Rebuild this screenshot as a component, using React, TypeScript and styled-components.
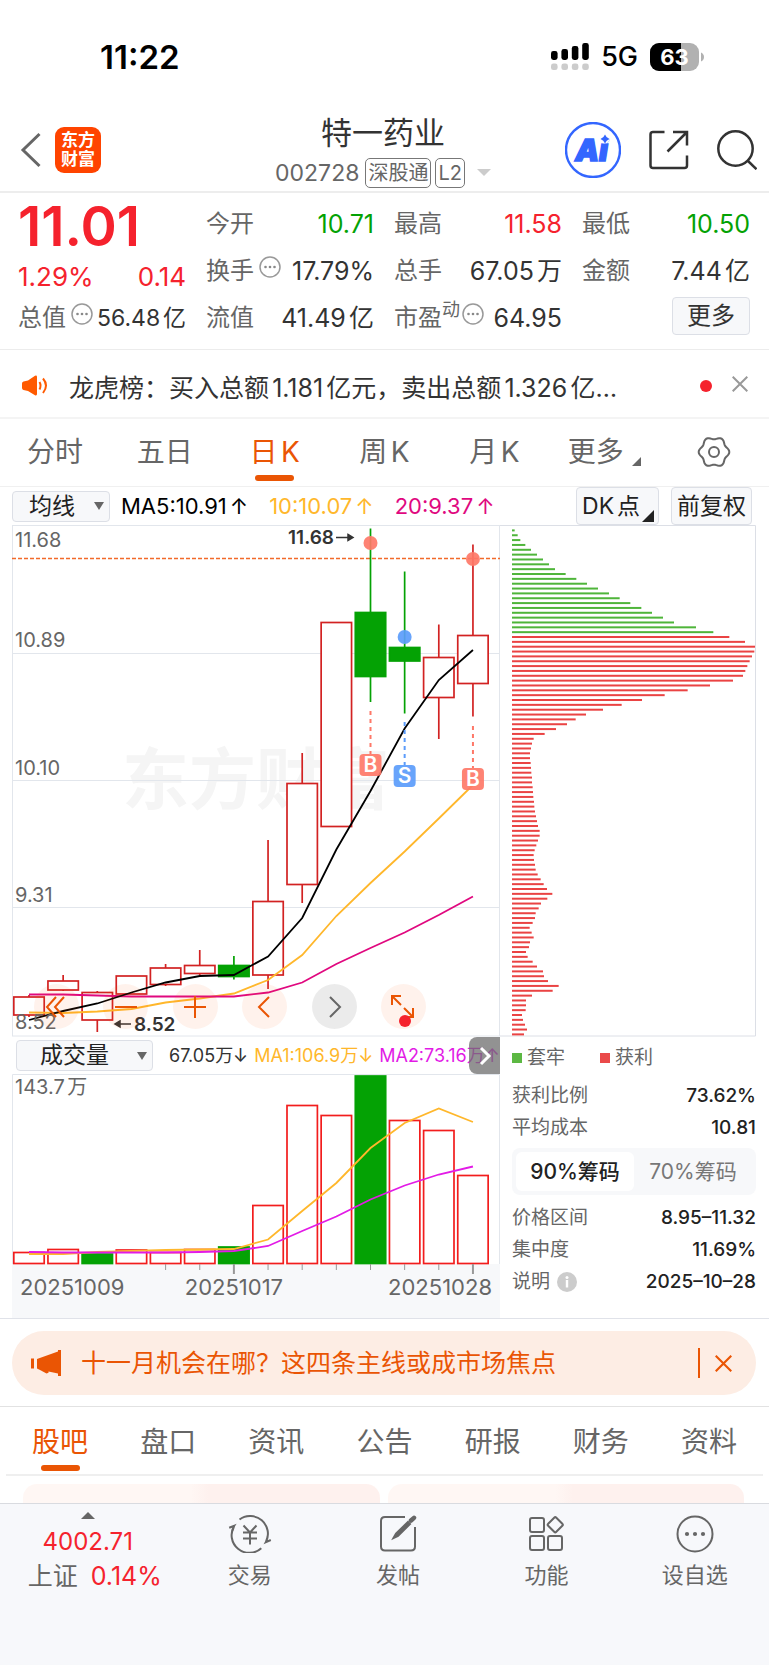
import React from "react";
import styled, { createGlobalStyle, css } from "styled-components";

const ORANGE = "#ea5504";
const RED = "#f5222d";
const GREEN = "#04a204";
const CANDLE_RED = "#d22222";
const GREY = "#666";
const INK = "#333";
const YELLOW = "#ffb72b";
const MAGENTA = "#e0087f";
const VIOLET = "#e21be6";

const Global = createGlobalStyle`
  * { box-sizing: border-box; }
  body {
    margin: 0;
    background: #fff;
    color: ${INK};
    font-family: Inter, "Noto Sans CJK SC", sans-serif;
  }
  button, select {
    font: inherit;
    color: inherit;
    background: none;
    border: 0;
    padding: 0;
    margin: 0;
    cursor: pointer;
  }
  svg { display: block; flex: none; }
`;

const Page = styled.div`
  display: flex;
  flex-direction: column;
  min-height: 100vh;
  overflow-x: hidden;
`;

/* ---------- status bar ---------- */

const StatusBar = styled.div`
  display: flex;
  align-items: center;
  justify-content: space-between;
  height: 107px;
  padding: 7px 65px 0 100px;
  color: #000;
`;

const Clock = styled.span`
  font-size: 33px;
  font-weight: 600;
  line-height: 40px;
`;

const StatusIcons = styled.div`
  display: flex;
  align-items: center;
  gap: 12px;
  font-size: 27px;
  font-weight: 500;
  line-height: 32px;
`;

/* ---------- header ---------- */

const Header = styled.header`
  display: grid;
  grid-template-columns: 1fr auto 1fr;
  align-items: center;
  height: 86px;
  padding: 0 12px 2px;
  border-bottom: 2px solid #ededed;
`;

const HeaderSide = styled.div<{ $end?: boolean }>`
  display: flex;
  align-items: center;
  gap: ${(p) => (p.$end ? 28 : 14)}px;
  padding-left: ${(p) => (p.$end ? 0 : 8)}px;
  justify-content: ${(p) => (p.$end ? "flex-end" : "flex-start")};
`;

const IconButton = styled.button`
  display: flex;
  align-items: center;
  justify-content: center;
  flex: none;
`;

const AppLogo = styled.a`
  display: flex;
  align-items: center;
  justify-content: center;
  width: 46px;
  height: 46px;
  border-radius: 9px;
  background: #ff4400;
  color: #fff;
  font-size: 17px;
  font-weight: 700;
  line-height: 19px;
  text-align: center;
  text-decoration: none;
`;

const TitleBlock = styled.div`
  display: flex;
  flex-direction: column;
  align-items: center;
  padding: 5px 3px 0 0;
`;

const Title = styled.h1`
  margin: 0;
  font-size: 31px;
  font-weight: 400;
  line-height: 42px;
`;

const Subtitle = styled.div`
  display: flex;
  align-items: center;
  gap: 4px;
  height: 38px;
  color: ${GREY};
  font-size: 23px;
  line-height: 32px;
`;

const Tag = styled.span`
  height: 30px;
  padding: 0 2px;
  border: 1px solid #777;
  border-radius: 5px;
  font-size: 20px;
  line-height: 28px;
  &:first-of-type { margin-left: 2px; }
`;

const Caret = styled.span<{ $color: string; $size?: number; $up?: boolean }>`
  width: 0;
  height: 0;
  border: ${(p) => p.$size ?? 7}px solid transparent;
  ${(p) =>
    p.$up
      ? css`border-top: 0; border-bottom-color: ${p.$color};`
      : css`border-bottom: 0; border-top: 8px solid ${p.$color};`}
`;

/* ---------- quote panel ---------- */

const Quote = styled.section`
  display: grid;
  grid-template-columns: repeat(4, 1fr);
  column-gap: 20px;
  padding: 7px 19px 7px 18px;
  height: 157px;
  border-bottom: 1px solid #ececec;
`;

const QuoteColumn = styled.div`
  display: grid;
  grid-template-rows: repeat(3, 47px);
`;

const PriceColumn = styled.div`
  display: grid;
  grid-template-rows: 53px 48px 34px;
`;

const Price = styled.div`
  color: ${RED};
  font-size: 55px;
  font-weight: 600;
  line-height: 53px;
`;

const QuoteRow = styled.div<{ $color?: string; $size?: number }>`
  display: flex;
  align-items: center;
  justify-content: space-between;
  color: ${(p) => p.$color ?? INK};
  font-size: ${(p) => p.$size ?? 25}px;
  line-height: 34px;
  white-space: nowrap;
  text-autospace: normal;
`;

const QuoteLabel = styled.span`
  display: flex;
  align-items: center;
  color: ${GREY};
  font-size: 24px;
  svg { margin: 0 0 8px 5px; }
  sup {
    align-self: flex-start;
    font-size: 18px;
    line-height: 18px;
  }
  sup + svg { margin-left: 2px; }
`;

const MoreButton = styled.button`
  justify-self: end;
  align-self: center;
  height: 38px;
  margin-bottom: 4px;
  padding: 0 14px;
  border: 1px solid #dcdfe6;
  border-radius: 4px;
  background: #f7f8fa;
  font-size: 24px;
  line-height: 32px;
`;

/* ---------- news ---------- */

const News = styled.section`
  display: flex;
  align-items: center;
  height: 69px;
  padding: 0 21px;
  border-bottom: 2px solid #f4f4f4;
`;

const NewsText = styled.a`
  flex: 1;
  min-width: 0;
  margin: 0 60px 0 21px;
  padding-top: 8px;
  overflow: hidden;
  color: ${INK};
  font-size: 25px;
  line-height: 36px;
  text-decoration: none;
  text-overflow: ellipsis;
  white-space: nowrap;
  text-autospace: normal;
`;

const Dot = styled.span`
  width: 12px;
  height: 12px;
  margin: 4px 20px 0 0;
  border-radius: 50%;
  background: ${RED};
`;

/* ---------- tabs ---------- */

const Tab = styled.button<{ $active?: boolean }>`
  display: flex;
  flex: 1;
  flex-direction: column;
  align-items: center;
  justify-content: flex-end;
  padding-bottom: 5px;
  color: ${(p) => (p.$active ? ORANGE : GREY)};
  font-size: 28px;
  line-height: 40px;
  text-autospace: normal;
  &::after {
    content: "";
    width: 39px;
    height: 6px;
    margin-top: 3px;
    border-radius: 3px;
    background: ${(p) => (p.$active ? ORANGE : "transparent")};
  }
`;

const Tabs = styled.nav`
  display: flex;
  height: 68px;
  border-bottom: 1px solid #f0f0f0;
`;

const SectionTabs = styled(Tabs)`
  height: 69px;
  margin: 0 6px;
  border-bottom: 2px solid #efefef;
  ${Tab} { padding-bottom: 3px; }
`;

const TabLabel = styled.span`
  display: flex;
  align-items: flex-end;
  height: 40px;
  svg { margin: 0 0 6px 8px; }
`;

const GearLabel = styled(TabLabel)`
  align-items: center;
  svg { margin: 0; }
`;

/* ---------- charts ---------- */

const ChartToolbar = styled.div`
  display: flex;
  align-items: center;
  height: 38px;
  padding: 0 17px 0 12px;
  color: #000;
  font-size: 22px;
  line-height: 30px;
  white-space: nowrap;
`;

const Indicator = styled.span<{ $color: string }>`
  display: flex;
  gap: 3px;
  margin-right: 21px;
  color: ${(p) => p.$color};
`;

const ChipButton = styled.button`
  position: relative;
  height: 38px;
  margin-left: 12px;
  padding: 0 5px;
  border: 1px solid #dcdfe6;
  border-radius: 4px;
  background: #f7f8fa;
  color: #222;
  font-size: 23px;
  line-height: 34px;
  text-autospace: normal;
`;

const DkButton = styled(ChipButton)`
  margin-left: auto;
  padding-right: 18px;
  svg { position: absolute; right: 4px; bottom: 2px; }
`;

const SelectBox = styled.label<{ $wide?: boolean }>`
  display: flex;
  position: relative;
  flex: none;
  align-items: center;
  width: ${(p) => (p.$wide ? 137 : 98)}px;
  height: 31px;
  margin-right: ${(p) => (p.$wide ? 16 : 11)}px;
  border: 1px solid #dcdfe6;
  border-radius: 4px;
  background: #f7f8fa;
  color: #222;
  select {
    width: 100%;
    height: 100%;
    padding-left: ${(p) => (p.$wide ? 23 : 16)}px;
    appearance: none;
    font-size: 23px;
    line-height: 29px;
    outline: 0;
  }
  ${Caret} {
    position: absolute;
    right: 5px;
    pointer-events: none;
  }
`;

const Charts = styled.section`
  display: grid;
  grid-template-columns: 488fr 257fr;
  padding: 0 12px;
  border-bottom: 1px solid #e0e2e9;
`;

const ChartColumn = styled.div`
  min-width: 0;
`;

const ChartStage = styled.div`
  position: relative;
`;

const Plot = styled.svg`
  width: 100%;
  height: auto;
  font-family: Inter, "Noto Sans CJK SC", sans-serif;
  text { text-autospace: normal; }
`;

const ZoomBar = styled.div`
  display: flex;
  position: absolute;
  right: 74px;
  bottom: 8px;
  left: 22px;
  justify-content: space-between;
`;

const RoundButton = styled(IconButton)<{ $dark?: boolean }>`
  width: 45px;
  height: 45px;
  border-radius: 50%;
  background: ${(p) => (p.$dark ? "rgba(0,0,0,.08)" : "rgba(255,90,10,.08)")};
`;

const VolumeBar = styled.div`
  display: flex;
  position: relative;
  align-items: center;
  height: 37px;
  padding-left: 4px;
  overflow: hidden;
  font-size: 18px;
  line-height: 26px;
  white-space: nowrap;
`;

const VolumeText = styled.span<{ $color: string }>`
  margin-right: 6px;
  padding-top: 1px;
  color: ${(p) => p.$color};
`;

const NextButton = styled(IconButton)`
  position: absolute;
  top: 0;
  right: 0;
  width: 31px;
  height: 37px;
  border-radius: 8px 0 0 8px;
  background: rgba(110, 110, 110, 0.75);
`;

const Stats = styled.div`
  padding: 5px 1px 0 12px;
  color: ${GREY};
  font-size: 19px;
  line-height: 30px;
`;

const Legend = styled.div`
  display: flex;
  gap: 35px;
  height: 38px;
`;

const LegendItem = styled.span<{ $color: string }>`
  display: flex;
  align-items: center;
  height: 31px;
  gap: 5px;
  &::before {
    content: "";
    width: 10px;
    height: 10px;
    background: ${(p) => p.$color};
  }
`;

const StatRow = styled.div`
  display: flex;
  align-items: center;
  justify-content: space-between;
  height: 32px;
  span { display: flex; align-items: center; gap: 7px; }
  strong { color: #222; font-weight: 500; }
`;

const Segment = styled.div`
  display: flex;
  height: 47px;
  margin: 4px 0 7px;
  padding: 4px;
  border-radius: 8px;
  background: #f7f8fa;
`;

const SegmentButton = styled.button<{ $active?: boolean }>`
  flex: 1;
  border-radius: 6px;
  background: ${(p) => (p.$active ? "#fff" : "transparent")};
  color: ${(p) => (p.$active ? "#222" : "#777")};
  font-size: 21px;
  font-weight: ${(p) => (p.$active ? 500 : 400)};
`;

/* ---------- banner, feed ---------- */

const BannerWrap = styled.section`
  padding: 12px 13px 11px 12px;
  border-bottom: 1px solid #e2e2e2;
`;

const Banner = styled.div`
  display: flex;
  align-items: center;
  height: 64px;
  padding: 0 24px 0 19px;
  border-radius: 32px;
  background: #fdede4;
  color: ${ORANGE};
`;

const BannerText = styled.a`
  flex: 1;
  margin-left: 20px;
  color: inherit;
  font-size: 25px;
  line-height: 36px;
  text-decoration: none;
`;

const Divider = styled.span`
  width: 2px;
  height: 30px;
  margin-right: 15px;
  background: ${ORANGE};
`;

const Feed = styled.div`
  display: flex;
  gap: 8px;
  height: 27px;
  padding: 8px 25px 0 23px;
  overflow: hidden;
`;

const FeedCard = styled.div`
  flex: 1;
  height: 120px;
  border-radius: 14px;
  background: linear-gradient(90deg, #fff7f4 0 47%, #fef1ee 52%);
`;

/* ---------- bottom navigation ---------- */

const BottomNav = styled.nav`
  display: grid;
  grid-template-columns: 175fr repeat(4, 148fr);
  flex: 1;
  align-items: start;
  min-height: 162px;
  border-top: 1px solid #d9dbe0;
  background: #f7f8fb;
`;

const NavItem = styled.button`
  display: flex;
  flex-direction: column;
  align-items: center;
  gap: 6px;
  padding-top: 11px;
  color: ${GREY};
  font-size: 22px;
  line-height: 32px;
`;

const IndexItem = styled.button`
  display: flex;
  flex-direction: column;
  align-items: center;
  padding-top: 8px;
  color: ${RED};
  font-size: 24px;
  line-height: 34px;
  ${Caret} { margin-bottom: 6px; }
`;

const IndexChange = styled.span`
  display: flex;
  gap: 13px;
  padding-left: 14px;
  font-size: 25px;
  em { color: ${GREY}; font-style: normal; }
`;

/* ---------- data ---------- */

const SLOT = 34.15;
const centre = (i: number) => 29 + i * SLOT;

type Candle = [high: number, top: number, bottom: number, low: number, up: boolean];

const candles: Candle[] = [
  [995, 997, 1015, 1017, true],
  [975, 981, 990, 991, true],
  [991, 992.5, 1020, 1032, true],
  [976, 976, 994, 994, true],
  [964, 968, 984.5, 986, true],
  [950, 965.5, 973.5, 975, true],
  [956, 965.5, 976.5, 979.5, false],
  [840, 901.5, 975, 989, true],
  [753, 783.5, 884.5, 903, true],
  [622.5, 622.5, 826.5, 826.5, true],
  [528.5, 612.5, 676.5, 702, false],
  [571.5, 647.5, 661, 713.5, false],
  [624.5, 657.5, 697.5, 739, true],
  [544.5, 635.5, 683.5, 716.5, true],
];

const ma5 = [1020, 1011, 1003.5, 992.5, 982.5, 976, 975, 956.5, 918, 849.5, 791, 728.5, 680, 650];
const ma10 = [1012.5, 1013, 1011.5, 1009, 1002.5, 998.5, 993.5, 980, 955, 916, 883, 851.5, 818.5, 785];
const ma20 = [994.5, 994.5, 995.5, 996.5, 996.5, 996.5, 996.5, 992.5, 982.5, 964, 948, 932.5, 915, 896.5];

const volumes = [1252.5, 1249.5, 1254, 1250, 1252.5, 1249.5, 1247, 1205.5, 1105.5, 1115.5, 1076, 1120.5, 1130.5, 1175.5];
const fallingVolumes = [2, 6, 10];
const volMa1 = [1254, 1254, 1252, 1251, 1250, 1249.5, 1249, 1239.5, 1211, 1183, 1148, 1123, 1108.5, 1122];
const volMa2 = [1252, 1252.5, 1252.5, 1252.5, 1252.5, 1252, 1251, 1246, 1231, 1216.5, 1199.5, 1185.5, 1174.5, 1166.5];

const chips = [
  8, 17, 25, 40, 57, 75, 93, 111, 129, 161, 193, 225, 258, 291, 323, 355, 388, 420, 453, 486, 552, 604,
  652, 699, 729, 727, 720, 713, 706, 700, 693, 663, 594, 527, 458, 390, 329, 273, 222, 191, 165, 132, 98,
  65, 60, 57, 54, 54, 56, 57, 58, 60, 60, 62, 63, 64, 66, 67, 69, 72, 75, 78, 83, 83, 78, 73, 68, 65, 66,
  69, 71, 77, 86, 95, 105, 121, 106, 87, 80, 71, 69, 62, 53, 59, 65, 54, 51, 42, 47, 62, 75, 93, 96, 108,
  140, 122, 60, 42, 42, 41, 30, 33, 39, 45, 36,
].map((v) => v / 3);
const TRAPPED = 22;

const polyline = (ys: number[]) => ys.map((y, i) => `${centre(i)},${y}`).join(" ");

const gearPath =
  Array.from({ length: 72 }, (_, i) => {
    const a = (i * Math.PI) / 36;
    const r = 14 + 1.3 * Math.cos(6 * a);
    return `${i ? "L" : "M"}${(17 + r * Math.cos(a)).toFixed(2)} ${(17 + r * Math.sin(a)).toFixed(2)}`;
  }).join("") + "Z";

/* ---------- icons ---------- */

const Ellipsis = () => (
  <svg width="22" height="22" viewBox="0 0 22 22" fill="#888">
    <circle cx="11" cy="11" r="10" fill="none" stroke="#999" strokeWidth="1.5" />
    <circle cx="6.5" cy="11" r="1.3" />
    <circle cx="11" cy="11" r="1.3" />
    <circle cx="15.5" cy="11" r="1.3" />
  </svg>
);

const Cross = ({ size, color, width = 2 }: { size: number; color: string; width?: number }) => (
  <svg width={size} height={size} viewBox="0 0 16 16" stroke={color} strokeWidth={width}>
    <path d="M.7.7 15.3 15.3M15.3.7.7 15.3" />
  </svg>
);

const Signal = () => (
  <svg width="38" height="28" viewBox="0 0 38 28">
    {[9, 11, 14, 17].map((h, i) => (
      <g key={h}>
        <rect x={i * 10.4} y={17 - h} width="6.6" height={h} rx="2.4" />
        <rect x={i * 10.4} y="20.5" width="6.6" height="6.6" rx="2.4" fill="#ccc" />
      </g>
    ))}
  </svg>
);

const Battery = () => (
  <svg width="54" height="28" viewBox="0 0 54 28">
    <defs>
      <clipPath id="cell"><rect width="49" height="28" rx="9" /></clipPath>
    </defs>
    <g clipPath="url(#cell)">
      <rect width="49" height="28" fill="#b1b1b1" />
      <rect width="31" height="28" />
    </g>
    <path d="M51 9.500q3 1.500 3 4.500t-3 4.500Z" fill="#b1b1b1" />
    <text x="24.500" y="22" fill="#fff" fontSize="22" fontWeight="700" textAnchor="middle">63</text>
  </svg>
);

const AiBadge = () => (
  <svg width="56" height="56" viewBox="0 0 56 56">
    <circle cx="28" cy="28" r="27" fill="none" stroke="#3366ff" strokeWidth="2.400" />
    <text x="26.500" y="38.500" fill="#3366ff" stroke="#3366ff" strokeWidth="1.500" fontSize="30" fontWeight="900" fontStyle="italic" textAnchor="middle">Ai</text>
    <circle cx="39.500" cy="16" r="5.500" fill="#fff" />
    <path d="M40 12.500q1.200 3.300 4.500 4.500-3.300 1.200-4.500 4.500-1.200-3.300-4.500-4.500 3.300-1.200 4.500-4.500Z" fill="#3366ff" />
  </svg>
);

const ShareIcon = () => (
  <svg width="40" height="40" viewBox="0 0 40 40" fill="none" stroke="#333" strokeWidth="2.500">
    <path d="M15.500 2H4Q1.500 2 1.500 4.500V35.500Q1.500 38 4 38H35.500Q38 38 38 35.500V25.500M24 2H38V15.500M38 2 18.500 21.500" />
  </svg>
);

const SearchIcon = () => (
  <svg width="40" height="40" viewBox="0 0 40 40" fill="none" stroke="#333" strokeWidth="2.500">
    <circle cx="18.500" cy="18.500" r="17.200" />
    <path d="M30.500 30.500 39.500 39.200" />
  </svg>
);

const Speaker = () => (
  <svg width="27" height="26" viewBox="0 -4 27 26" fill="#ff5a00">
    <path d="M2.500 6.500 7 5.500 14 .8Q16 0 16 2V19Q16 21 14 20.200L7 16 2.500 15Q1 14.500 1 13V8.500Q1 7 2.500 6.500Z" />
    <path d="M18.500 7Q20.500 10.500 18.500 14.500M22 3.500Q28 10.500 22 18" fill="none" stroke="#ff5a00" strokeWidth="2" />
  </svg>
);

const Corner = ({ size, color }: { size: number; color: string }) => (
  <svg width={size} height={size} viewBox="0 0 10 10" fill={color}><path d="M10 0V10H0Z" /></svg>
);

const Megaphone = () => (
  <svg width="30" height="26" viewBox="0 0 30 26" fill={ORANGE}>
    <path d="M0 8.500H3V18.500H0ZM6 9 27 1.500V0H30V26H27V23.500L17.500 21.500V22.800L15.500 23.500 10 20.500 6 18.500Z" />
  </svg>
);

const TradeIcon = () => (
  <svg width="44" height="38" viewBox="0 0 44 38" fill="none" stroke={GREY} strokeWidth="2">
    <path d="M11.500 4.500A17.800 17.800 0 0 1 37.800 27.200L42.800 25M37.800 27.200 39.500 22M33.300 33.300A17.800 17.800 0 0 1 6.200 10.800L1.200 12.800M6.200 10.800 4.500 16" />
    <path d="M15.500 10.500 22 17.500 28.500 10.500M22 17.500V29.500M15 17.500H29M15 23.500H29" />
  </svg>
);

const PostIcon = () => (
  <svg width="38" height="38" viewBox="0 0 38 38" fill="none" stroke={GREY} strokeWidth="2">
    <path d="M26 2H6Q2 2 2 6V31.500Q2 35.500 6 35.500H32Q36 35.500 36 31.500V12" />
    <path d="M14.500 23 17 18.500 29 7 31 9 19 21Z" fill={GREY} />
    <path d="M32 5.500 35 2.800" strokeWidth="4.500" strokeLinecap="round" />
  </svg>
);

const GridIcon = () => (
  <svg width="38" height="38" viewBox="0 0 38 38" fill="none" stroke={GREY} strokeWidth="2">
    <rect x="3" y="3" width="14" height="14" rx="2" />
    <rect x="3" y="21" width="14" height="14" rx="2" />
    <rect x="21" y="21" width="14" height="14" rx="2" />
    <rect x="22.500" y="4" width="11.500" height="11.500" rx="1.500" transform="rotate(45 28.250 9.750)" />
  </svg>
);

const WatchIcon = () => (
  <svg width="38" height="38" viewBox="0 0 38 38" fill={GREY}>
    <circle cx="19" cy="19" r="17.500" fill="none" stroke={GREY} strokeWidth="2" />
    <circle cx="11" cy="19" r="2.100" />
    <circle cx="19" cy="19" r="2.100" />
    <circle cx="27" cy="19" r="2.100" />
  </svg>
);

/* ---------- chart parts ---------- */

const CandlePlot = () => (
  <Plot viewBox="12 525 488 512" role="img" aria-label="日K线图">
    <text x="122" y="804" fill="#f5f5f5" fontSize="67" fontWeight="700">东方财富</text>
    <g stroke="#e2e6ec" strokeWidth="1">
      {[525.5, 653.5, 780.5, 907.5, 1036].map((y) => (
        <line key={y} x1="12" x2="500" y1={y} y2={y} />
      ))}
      <line x1="12.500" x2="12.500" y1="525" y2="1036" />
      <line x1="499.500" x2="499.500" y1="525" y2="1036" />
    </g>
    <line x1="12" x2="500" y1="558.500" y2="558.500" stroke="#f26a2a" strokeWidth="1.500" strokeDasharray="4 2" />
    {candles.map(([high, top, bottom, low, up], i) => (
      <g key={i} stroke={up ? CANDLE_RED : GREEN} strokeWidth="1.700" fill={up ? "#fff" : GREEN}>
        <line x1={centre(i)} x2={centre(i)} y1={high} y2={low} />
        <rect x={centre(i) - 15.2} y={top} width="30.400" height={bottom - top} />
      </g>
    ))}
    <g fill="none" strokeWidth="1.800">
      <polyline points={polyline(ma10)} stroke={YELLOW} />
      <polyline points={polyline(ma20)} stroke={MAGENTA} />
      <polyline points={polyline(ma5)} stroke="#000" />
    </g>
    <g fill={GREY} fontSize="20">
      <text x="15" y="547">11.68</text>
      <text x="15" y="647">10.89</text>
      <text x="15" y="775">10.10</text>
      <text x="15" y="902">9.31</text>
      <text x="15" y="1029">8.52</text>
    </g>
    <g fill={INK} fontSize="19" fontWeight="600">
      <text x="334" y="544" textAnchor="end">11.68</text>
      <text x="134" y="1031">8.52</text>
    </g>
    <g stroke={INK} strokeWidth="1.500" fill={INK}>
      <path d="M336 537.500H350M348 534.500 353 537.500 348 540.500Z" />
      <path d="M131 1024H118M120 1021 115 1024 120 1027Z" />
    </g>
    {[
      { i: 10, dot: 543, from: 711, y: 754, letter: "B", color: "#fe7868" },
      { i: 11, dot: 637, from: 722, y: 765, letter: "S", color: "#5b9cfb" },
      { i: 13, dot: 559, from: 726, y: 768, letter: "B", color: "#fe7868" },
    ].map((m) => (
      <g key={m.i} fill={m.color}>
        <circle cx={centre(m.i)} cy={m.dot} r="7" opacity=".92" />
        <line x1={centre(m.i)} x2={centre(m.i)} y1={m.from} y2={m.y} stroke={m.color} strokeWidth="2" strokeDasharray="4 4" />
        <rect x={centre(m.i) - 11} y={m.y} width="22" height="22" rx="4" opacity=".92" />
        <text x={centre(m.i)} y={m.y + 18} fill="#fff" fontSize="21" fontWeight="600" textAnchor="middle">{m.letter}</text>
      </g>
    ))}
  </Plot>
);

const ChipPlot = () => (
  <Plot viewBox="500 525 257 512" role="img" aria-label="筹码分布">
    <path d="M500 525.500H755.500V1036H500" fill="none" stroke="#dcdfe6" />
    {chips.map((w, i) => (
      <rect key={i} x="512" y={529.4 + i * 4.846} width={w} height="2" fill={i < TRAPPED ? "#4fb53a" : "#ea4343"} />
    ))}
  </Plot>
);

const VolumePlot = () => (
  <Plot viewBox="12 1074 488 244" role="img" aria-label="成交量图">
    <rect x="12" y="1264" width="488" height="54" fill="#f7f8fa" />
    <path d="M12.500 1264V1074.500H499.500V1264" fill="none" stroke="#e2e6ec" />
    {volumes.map((top, i) => {
      const up = !fallingVolumes.includes(i);
      return (
        <rect
          key={i}
          x={centre(i) - 15.2}
          y={top}
          width="30.400"
          height={1263.5 - top}
          fill={up ? "#fff" : GREEN}
          stroke={up ? "#f21d1d" : GREEN}
          strokeWidth="1.700"
        />
      );
    })}
    <g fill="none" strokeWidth="1.800">
      <polyline points={polyline(volMa1)} stroke={YELLOW} />
      <polyline points={polyline(volMa2)} stroke={VIOLET} />
    </g>
    <g stroke="#999">
      {[4, 5, 7, 8, 9, 10, 11, 12].map((i) => (
        <line key={i} x1={centre(i)} x2={centre(i)} y1="1264" y2="1270" />
      ))}
      {[6, 13].map((i) => (
        <line key={i} x1={centre(i)} x2={centre(i)} y1="1264" y2="1274" strokeWidth="2" />
      ))}
    </g>
    <text x="15" y="1094" fill={GREY} fontSize="20">143.7万</text>
    <g fill={GREY} fontSize="22">
      <text x="20" y="1295">20251009</text>
      <text x={centre(6)} y="1295" textAnchor="middle">20251017</text>
      <text x="492" y="1295" textAnchor="end">20251028</text>
    </g>
  </Plot>
);

const Stroke = ({ d, color = ORANGE }: { d: string; color?: string }) => (
  <svg width="26" height="26" viewBox="0 0 26 26" fill="none" stroke={color} strokeWidth="2"><path d={d} /></svg>
);

/* ---------- page ---------- */

export default function App() {
  return (
    <Page>
      <Global />
      <StatusBar>
        <Clock>11:22</Clock>
        <StatusIcons>
          <Signal />
          <span>5G</span>
          <Battery />
        </StatusIcons>
      </StatusBar>

      <Header>
        <HeaderSide>
          <IconButton aria-label="返回">
            <svg width="21" height="36" viewBox="0 0 21 36" fill="none" stroke="#666" strokeWidth="3">
              <path d="M19.500 2 3 18 19.500 34" />
            </svg>
          </IconButton>
          <AppLogo href="#">东方<br />财富</AppLogo>
        </HeaderSide>
        <TitleBlock>
          <Title>特一药业</Title>
          <Subtitle>
            002728
            <Tag>深股通</Tag>
            <Tag>L2</Tag>
            <svg width="22" height="8" viewBox="0 0 22 8"><path d="M8 0H22L15 7Z" fill="#ccc" /></svg>
          </Subtitle>
        </TitleBlock>
        <HeaderSide $end>
          <IconButton aria-label="智能助手"><AiBadge /></IconButton>
          <IconButton aria-label="分享"><ShareIcon /></IconButton>
          <IconButton aria-label="搜索"><SearchIcon /></IconButton>
        </HeaderSide>
      </Header>

      <Quote>
        <PriceColumn>
          <Price>11.01</Price>
          <QuoteRow $color={RED} $size={26}><span>1.29%</span><span>0.14</span></QuoteRow>
          <QuoteRow $size={23}><QuoteLabel>总值<Ellipsis /></QuoteLabel><span>56.48亿</span></QuoteRow>
        </PriceColumn>
        <QuoteColumn>
          <QuoteRow $color={GREEN}><QuoteLabel>今开</QuoteLabel><span>10.71</span></QuoteRow>
          <QuoteRow><QuoteLabel>换手<Ellipsis /></QuoteLabel><span>17.79%</span></QuoteRow>
          <QuoteRow><QuoteLabel>流值</QuoteLabel><span>41.49亿</span></QuoteRow>
        </QuoteColumn>
        <QuoteColumn>
          <QuoteRow $color={RED}><QuoteLabel>最高</QuoteLabel><span>11.58</span></QuoteRow>
          <QuoteRow><QuoteLabel>总手</QuoteLabel><span>67.05万</span></QuoteRow>
          <QuoteRow><QuoteLabel>市盈<sup>动</sup><Ellipsis /></QuoteLabel><span>64.95</span></QuoteRow>
        </QuoteColumn>
        <QuoteColumn>
          <QuoteRow $color={GREEN}><QuoteLabel>最低</QuoteLabel><span>10.50</span></QuoteRow>
          <QuoteRow><QuoteLabel>金额</QuoteLabel><span>7.44亿</span></QuoteRow>
          <MoreButton>更多</MoreButton>
        </QuoteColumn>
      </Quote>

      <News>
        <Speaker />
        <NewsText href="#">龙虎榜：买入总额1.181亿元，卖出总额1.326亿…</NewsText>
        <Dot />
        <IconButton aria-label="关闭"><Cross size={16} color="#999" /></IconButton>
      </News>

      <Tabs>
        <Tab>分时</Tab>
        <Tab>五日</Tab>
        <Tab $active>日K</Tab>
        <Tab>周K</Tab>
        <Tab>月K</Tab>
        <Tab><TabLabel>更多<Corner size={9} color="#666" /></TabLabel></Tab>
        <Tab aria-label="设置">
          <GearLabel>
            <svg width="34" height="34" viewBox="0 0 34 34" fill="none" stroke={GREY} strokeWidth="2">
              <path d={gearPath} />
              <circle cx="17" cy="17" r="5" />
            </svg>
          </GearLabel>
        </Tab>
      </Tabs>

      <ChartToolbar>
        <SelectBox>
          <select aria-label="主图指标"><option>均线</option></select>
          <Caret $color="#666" $size={5} />
        </SelectBox>
        <Indicator $color="#000">MA5:10.91<span>↑</span></Indicator>
        <Indicator $color={YELLOW}>10:10.07<span>↑</span></Indicator>
        <Indicator $color={MAGENTA}>20:9.37<span>↑</span></Indicator>
        <DkButton>DK点<Corner size={12} color="#222" /></DkButton>
        <ChipButton>前复权</ChipButton>
      </ChartToolbar>

      <Charts>
        <ChartColumn>
          <ChartStage>
            <CandlePlot />
            <ZoomBar>
              <RoundButton aria-label="最早"><Stroke d="M12 3 3 13 12 23M20 3 11 13 20 23" /></RoundButton>
              <RoundButton aria-label="缩小"><Stroke d="M2 13H24" /></RoundButton>
              <RoundButton aria-label="放大"><Stroke d="M2 13H24M13 2V24" /></RoundButton>
              <RoundButton aria-label="向左"><Stroke d="M17 3 7 13 17 23" /></RoundButton>
              <RoundButton $dark aria-label="向右"><Stroke color="#666" d="M9 3 19 13 9 23" /></RoundButton>
              <RoundButton aria-label="全屏">
                <svg width="30" height="42" viewBox="0 0 30 42" fill="none" stroke={ORANGE} strokeWidth="2">
                  <path d="M4 19V10H13M4 10 13 19M25 22V31H16M25 31 16 22" />
                  <circle cx="17" cy="35" r="6" fill={RED} stroke="none" />
                </svg>
              </RoundButton>
            </ZoomBar>
          </ChartStage>
          <VolumeBar>
            <SelectBox $wide>
              <select aria-label="副图指标"><option>成交量</option></select>
              <Caret $color="#666" $size={5} />
            </SelectBox>
            <VolumeText $color={INK}>67.05万↓</VolumeText>
            <VolumeText $color={YELLOW}>MA1:106.9万↓</VolumeText>
            <VolumeText $color={VIOLET}>MA2:73.16万↑</VolumeText>
            <NextButton aria-label="展开">
              <svg width="14" height="20" viewBox="0 0 14 20" fill="none" stroke="#fff" strokeWidth="3"><path d="M3 2 11 10 3 18" /></svg>
            </NextButton>
          </VolumeBar>
          <VolumePlot />
        </ChartColumn>
        <ChartColumn>
          <ChipPlot />
          <Stats>
            <Legend>
              <LegendItem $color="#5cb843">套牢</LegendItem>
              <LegendItem $color="#ea4a4a">获利</LegendItem>
            </Legend>
            <StatRow>获利比例<strong>73.62%</strong></StatRow>
            <StatRow>平均成本<strong>10.81</strong></StatRow>
            <Segment>
              <SegmentButton $active>90%筹码</SegmentButton>
              <SegmentButton>70%筹码</SegmentButton>
            </Segment>
            <StatRow>价格区间<strong>8.95–11.32</strong></StatRow>
            <StatRow>集中度<strong>11.69%</strong></StatRow>
            <StatRow>
              <span>
                说明
                <svg width="20" height="20" viewBox="0 0 20 20">
                  <circle cx="10" cy="10" r="10" fill="#ccc" />
                  <path d="M10 8V15.500" stroke="#fff" strokeWidth="2.400" />
                  <circle cx="10" cy="5.500" r="1.500" fill="#fff" />
                </svg>
              </span>
              <strong>2025–10–28</strong>
            </StatRow>
          </Stats>
        </ChartColumn>
      </Charts>

      <BannerWrap>
        <Banner>
          <Megaphone />
          <BannerText href="#">十一月机会在哪？这四条主线或成市场焦点</BannerText>
          <Divider />
          <IconButton aria-label="关闭"><Cross size={17} color={ORANGE} /></IconButton>
        </Banner>
      </BannerWrap>

      <SectionTabs>
        {["股吧", "盘口", "资讯", "公告", "研报", "财务", "资料"].map((t, i) => (
          <Tab key={t} $active={i === 0}>{t}</Tab>
        ))}
      </SectionTabs>
      <Feed>
        <FeedCard />
        <FeedCard />
      </Feed>

      <BottomNav>
        <IndexItem>
          <Caret $up $color="#666" />
          <span>4002.71</span>
          <IndexChange><em>上证</em>0.14%</IndexChange>
        </IndexItem>
        <NavItem><TradeIcon />交易</NavItem>
        <NavItem><PostIcon />发帖</NavItem>
        <NavItem><GridIcon />功能</NavItem>
        <NavItem><WatchIcon />设自选</NavItem>
      </BottomNav>
    </Page>
  );
}
